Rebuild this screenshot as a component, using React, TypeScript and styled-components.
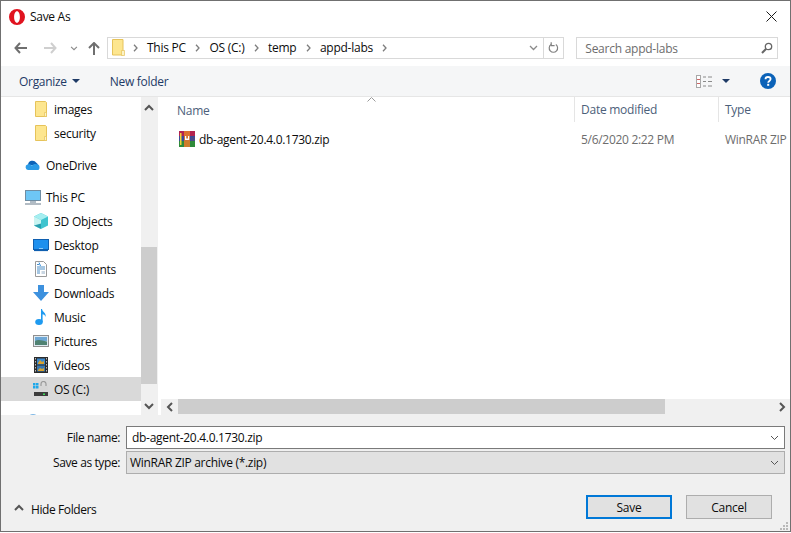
import React from 'react';
import styled, { createGlobalStyle } from 'styled-components';

const GlobalStyle = createGlobalStyle`
  html, body {
    margin: 0;
    padding: 0;
    background: #fff;
  }
  body {
    font-family: "Open Sans", "Noto Sans", sans-serif;
    font-size: 12px;
    color: #0c0c0c;
    overflow: hidden;
  }
  * {
    box-sizing: border-box;
  }
`;

const Window = styled.div`
  width: 791px;
  height: 532px;
  border: 1px solid #707070;
  display: flex;
  flex-direction: column;
  background: #fff;
  overflow: hidden;
`;

const TitleBar = styled.div`
  height: 31px;
  flex: none;
  display: flex;
  align-items: center;
  padding: 0 13px 0 8px;
  gap: 5px;
`;

const TitleText = styled.span`
  flex: 1;
  letter-spacing: -0.3px;
`;

const NavBar = styled.div`
  height: 34px;
  flex: none;
  display: flex;
  align-items: center;
  padding: 0 12px 2px 13px;
`;

const NavIcons = styled.div`
  width: 93px;
  display: flex;
  align-items: center;
`;

const NavSlot = styled.span<{ $w: number }>`
  width: ${(p) => p.$w}px;
  display: flex;
`;

const AddressBox = styled.div`
  width: 458px;
  height: 22px;
  border: 1px solid #d9d9d9;
  display: flex;
  align-items: center;
  padding: 0 0 1px 3px;
`;

const Crumbs = styled.div`
  flex: 1;
  display: flex;
  align-items: center;
  margin-left: 8px;
`;

const Crumb = styled.span`
  letter-spacing: -0.25px;
  margin: 0 9.5px 0 9px;
  white-space: nowrap;
`;

const AddressTail = styled.div`
  width: 20px;
  height: 20px;
  border-left: 1px solid #d9d9d9;
  display: flex;
  align-items: center;
  justify-content: center;
  margin-left: 5px;
`;

const SearchBox = styled.div`
  width: 202px;
  height: 22px;
  margin-left: 12px;
  border: 1px solid #d9d9d9;
  display: flex;
  align-items: center;
  justify-content: space-between;
  padding: 0 4px 0 8px;
  color: #6d6d6d;
  letter-spacing: -0.25px;
`;

const ToolBar = styled.div`
  height: 31px;
  flex: none;
  background: #f5f6f7;
  border-bottom: 1px solid #e6e6e6;
  display: flex;
  align-items: center;
  padding: 0 14px 0 18px;
  color: #1e3a66;
`;

const ToolLabel = styled.span`
  letter-spacing: -0.3px;
`;

const ToolGap = styled.span<{ $w: number }>`
  width: ${(p) => p.$w}px;
  display: flex;
  justify-content: flex-end;
`;

const Spacer = styled.span`
  flex: 1;
`;

const Main = styled.div`
  height: 318px;
  flex: none;
  display: flex;
`;

const Sidebar = styled.div`
  width: 140px;
  overflow: hidden;
  display: flex;
  flex-direction: column;
  gap: 8px;
`;

const NavGroup = styled.div`
  display: flex;
  flex-direction: column;
  flex: none;
`;

const NavItem = styled.div<{ $sub?: boolean; $selected?: boolean }>`
  height: 24px;
  flex: none;
  display: flex;
  align-items: center;
  gap: 5px;
  padding-left: ${(p) => (p.$sub ? 32 : 24)}px;
  background: ${(p) => (p.$selected ? '#d9d9d9' : 'transparent')};
  letter-spacing: -0.25px;
`;

const VScroll = styled.div`
  width: 16px;
  background: #f0f0f0;
  display: flex;
  flex-direction: column;
`;

const VArrow = styled.div`
  height: 17px;
  flex: none;
  display: flex;
  align-items: center;
  justify-content: center;
  margin-top: 3px;
`;

const VTrack = styled.div`
  flex: 1;
  display: flex;
  flex-direction: column;
  justify-content: flex-end;
  padding-bottom: 11px;
`;

const VThumb = styled.div`
  height: 137px;
  background: #cdcdcd;
`;

const ListPane = styled.div`
  flex: 1;
  min-width: 0;
  display: flex;
  flex-direction: column;
  border-left: 1px solid #f0f0f0;
  padding-left: 2px;
  overflow: hidden;
`;

const HeaderRow = styled.div`
  height: 25px;
  flex: none;
  display: flex;
  color: #4c607a;
  letter-spacing: -0.25px;
`;

const HeadName = styled.div`
  width: 414px;
  flex: none;
  display: flex;
  flex-direction: column;
  padding-left: 17px;
`;

const SortCaret = styled.span`
  height: 5px;
  display: flex;
  padding-left: 190px;
`;

const HeadCell = styled.div<{ $w: number }>`
  width: ${(p) => p.$w}px;
  flex: none;
  display: flex;
  align-items: center;
  padding-left: 6px;
  border-left: 1px solid #e5e5e5;
`;

const FileList = styled.div`
  flex: 1;
  padding-top: 6px;
`;

const FileRow = styled.div`
  height: 22px;
  display: flex;
  align-items: center;
  overflow: hidden;
  letter-spacing: -0.3px;
`;

const FileName = styled.div`
  width: 414px;
  flex: none;
  display: flex;
  align-items: center;
  gap: 4px;
  padding-left: 19px;
`;

const FileMeta = styled.div<{ $w: number }>`
  width: ${(p) => p.$w}px;
  flex: none;
  padding-left: 7px;
  color: #6d6d6d;
  white-space: nowrap;
`;

const HScroll = styled.div`
  height: 16px;
  flex: none;
  margin-left: 1px;
  background: #f0f0f0;
  display: flex;
  align-items: stretch;
`;

const HArrow = styled.div`
  width: 17px;
  flex: none;
  display: flex;
  align-items: center;
  justify-content: center;
`;

const HTrack = styled.div`
  flex: 1;
  padding-bottom: 1px;
  display: flex;
`;

const HThumb = styled.div`
  width: 487px;
  background: #cdcdcd;
`;

const Footer = styled.div`
  flex: 1;
  min-height: 0;
  background: #f0f0f0;
  display: flex;
  flex-direction: column;
  padding: 11px 4px 0 0;
`;

const FieldRow = styled.div`
  display: flex;
  align-items: center;
  margin-bottom: 2px;
  padding-right: 1px;
`;

const FieldLabel = styled.label`
  width: 119px;
  text-align: right;
  margin-right: 6px;
  letter-spacing: -0.4px;
`;

const FieldBox = styled.div<{ $combo?: boolean }>`
  flex: 1;
  height: 23px;
  display: flex;
  align-items: center;
  justify-content: space-between;
  padding: 0 5px 0 ${(p) => (p.$combo ? 3 : 5)}px;
  background: ${(p) => (p.$combo ? '#e1e1e1' : '#fff')};
  border: 1px solid ${(p) => (p.$combo ? '#adadad' : '#7a7a7a')};
  letter-spacing: -0.3px;
`;

const ActionRow = styled.div`
  display: flex;
  align-items: center;
  margin-top: 19px;
  padding: 0 14px 0 13px;
`;

const HideFolders = styled.div`
  display: flex;
  align-items: center;
  gap: 7px;
  flex: 1;
  padding-top: 4px;
  letter-spacing: -0.4px;
`;

const ActionButton = styled.button<{ $primary?: boolean }>`
  width: 86px;
  height: 24px;
  margin-left: 14px;
  padding: 0;
  background: #e1e1e1;
  border: ${(p) => (p.$primary ? '2px solid #0078d7' : '1px solid #adadad')};
  font: inherit;
  color: #0c0c0c;
  letter-spacing: -0.25px;
`;

const GripRow = styled.div`
  display: flex;
  justify-content: flex-end;
  margin: 3px -3px 0 0;
`;

const OperaIcon = () => (
  <svg width="16" height="16" viewBox="0 0 16 16">
    <path fill="#e0131f" fillRule="evenodd" d="M8 0a8 8 0 1 0 0 16A8 8 0 0 0 8 0zm0 2.2c1.7 0 2.9 2.6 2.9 5.8S9.7 13.8 8 13.8 5.1 11.2 5.1 8 6.3 2.2 8 2.2z" />
  </svg>
);

const CloseIcon = () => (
  <svg width="11" height="11" viewBox="0 0 11 11">
    <path d="M.5.5l10 10M10.500.5l-10 10" stroke="#1a1a1a" strokeWidth="1" fill="none" />
  </svg>
);

const ArrowLeft = ({ color = '#6f6f6f', flip = false }: { color?: string; flip?: boolean }) => (
  <svg width="13" height="12" viewBox="0 0 13 12" style={flip ? { transform: 'scaleX(-1)' } : undefined}>
    <path d="M6 1L1.500 6 6 11M1.500 6H13" stroke={color} strokeWidth="2" fill="none" />
  </svg>
);

const ArrowUp = () => (
  <svg width="12" height="13" viewBox="0 0 12 13">
    <path d="M1 6l5-5 5 5M6 1v12" stroke="#6f6f6f" strokeWidth="2" fill="none" />
  </svg>
);

const Chevron = ({ size = 7, color = '#8a8a8a', width = 1.3 }: { size?: number; color?: string; width?: number }) => (
  <svg width={size + 2} height={size - 1} viewBox="0 0 9 6">
    <path d="M1 1l3.500 3.500L8 1" stroke={color} strokeWidth={width} fill="none" />
  </svg>
);

const CrumbSep = () => (
  <svg width="5" height="8" viewBox="0 0 5 8">
    <path d="M1 .8L4 4 1 7.200" stroke="#7d7d7d" strokeWidth="1.300" fill="none" />
  </svg>
);

const RefreshIcon = () => (
  <svg width="11" height="12" viewBox="0 0 11 12">
    <path d="M7.800 2.600A4.200 4.200 0 1 1 3 2.600" stroke="#808080" strokeWidth="1.200" fill="none" />
    <path d="M3.200 .2v3.400h3.400" stroke="#808080" strokeWidth="1.200" fill="none" />
  </svg>
);

const SearchIcon = () => (
  <svg width="12" height="12" viewBox="0 0 12 12">
    <circle cx="7.500" cy="4.500" r="3.200" stroke="#666" strokeWidth="1.300" fill="none" />
    <path d="M5 7L1 11" stroke="#666" strokeWidth="2" />
  </svg>
);

const Caret = () => (
  <svg width="8" height="4" viewBox="0 0 8 4">
    <path d="M0 0h8L4 4z" fill="#1e3a66" />
  </svg>
);

const ViewIcon = () => (
  <svg width="17" height="13" viewBox="0 0 17 13">
    <rect x=".5" y=".5" width="4" height="12" fill="#fff" stroke="#a8a8a8" />
    <path d="M1 4.500h3M1 8.500h3" stroke="#c66" />
    <path d="M7 2h3M12 2h4M7 6.500h3M12 6.500h4M7 11h3M12 11h4" stroke="#8a8a8a" />
  </svg>
);

const HelpIcon = () => (
  <svg width="16" height="16" viewBox="0 0 16 16">
    <circle cx="8" cy="8" r="8" fill="#0b62b8" />
    <path d="M5.500 6.200C5.500 4.700 6.600 4 8 4s2.600.8 2.600 2.100c0 1.900-2.400 1.900-2.400 3.700" stroke="#fff" strokeWidth="1.800" fill="none" />
    <rect x="7.200" y="10.800" width="2" height="2" fill="#fff" />
  </svg>
);

const FolderIcon = () => (
  <svg width="16" height="16" viewBox="0 0 16 16">
    <path d="M2.500.500h10l1 1v14h-11z" fill="#fde68f" stroke="#e6c35a" />
    <path d="M11.500 15.500v-4h2v4z" fill="#fbf3c6" stroke="#e6c35a" strokeWidth=".7" />
  </svg>
);

const AddressFolder = () => (
  <svg width="14" height="17" viewBox="0 0 14 17">
    <path d="M1.500.500h10.500v15.500H1.500z" fill="#fde68f" stroke="#e6c35a" />
    <path d="M10.500 16.500v-5h3v5z" fill="#fbf3c6" stroke="#e6c35a" strokeWidth=".7" />
  </svg>
);

const OneDriveIcon = () => (
  <svg width="16" height="16" viewBox="0 0 16 16">
    <path d="M3 8a4.500 4.500 0 0 1 8.300-2.200A3 3 0 0 1 13 8z" fill="#0d63b8" />
    <path d="M3 13a2.800 2.800 0 0 1-.6-5.400c1.800-1 3.700 0 4.600 1 1-1.600 3-2 4.400-1.400a2.900 2.900 0 0 1 3.100 2.900A2.900 2.900 0 0 1 13.500 13z" fill="#2b9be6" />
  </svg>
);

const ThisPcIcon = () => (
  <svg width="16" height="16" viewBox="0 0 16 16">
    <rect x=".5" y="1.500" width="15" height="10" fill="#6ec6f5" stroke="#6f8da3" />
    <rect x="5" y="12" width="6" height="2" fill="#b0bcc6" />
    <path d="M0 15h16" stroke="#9aa6b0" strokeWidth="1.500" />
  </svg>
);

const ObjectsIcon = () => (
  <svg width="16" height="16" viewBox="0 0 16 16">
    <path d="M8 0l7 3.500v9L8 16l-7-3.500v-9z" fill="#3fc4cf" />
    <path d="M8 0l7 3.500L8 7 1 3.500z" fill="#a5eef0" />
    <path d="M8 7v9l-7-3.500v-9z" fill="#c8f4f2" />
    <path d="M8 10.500v5.500l-7-3.500z" fill="#2aa0b0" />
  </svg>
);

const DesktopIcon = () => (
  <svg width="16" height="16" viewBox="0 0 16 16">
    <rect x=".5" y="2.500" width="15" height="10" fill="#1e90ee" stroke="#0f5fb0" />
    <path d="M1 13.500h14" stroke="#0f5fb0" strokeWidth="1.200" />
    <path d="M6 11.500h4" stroke="#8ccbf8" />
  </svg>
);

const DocumentsIcon = () => (
  <svg width="16" height="16" viewBox="0 0 16 16">
    <path d="M2.500.500h8l3 3v12h-11z" fill="#fff" stroke="#9a9a9a" />
    <path d="M4 3.500h2M4 6h8M4 8h8M4 10h3M4 12h3" stroke="#4d8fc7" />
    <rect x="8.500" y="10" width="3.500" height="3" fill="#c9d6e2" />
    <path d="M6 1.500L7.500 5" stroke="#2e8de0" />
  </svg>
);

const DownloadsIcon = () => (
  <svg width="16" height="16" viewBox="0 0 16 16">
    <path d="M5 0h6v7h5l-8 9-8-9h5z" fill="#3d91de" />
  </svg>
);

const MusicIcon = () => (
  <svg width="16" height="16" viewBox="0 0 16 16">
    <ellipse cx="6" cy="13" rx="3.800" ry="3" fill="#1e9af0" />
    <path d="M8 13V0h1c.4 3 4.400 3.500 3.600 8C12 5.800 10.500 5.200 9.600 5.200V13z" fill="#1e9af0" />
  </svg>
);

const PicturesIcon = () => (
  <svg width="16" height="14" viewBox="0 0 16 14">
    <rect x=".5" y="1.500" width="15" height="11" fill="#dfeaf2" stroke="#8f8f8f" />
    <rect x="2" y="3" width="12" height="4" fill="#6fa8d6" />
    <path d="M2 7c3-2 6-1 12 .5V11H2z" fill="#4f8272" />
  </svg>
);

const VideosIcon = () => (
  <svg width="16" height="16" viewBox="0 0 16 16">
    <rect x="1" y="0" width="14" height="16" fill="#2c2c2c" />
    <rect x="4" y="1.500" width="8" height="6" fill="#3a88cc" />
    <rect x="4" y="8.500" width="8" height="6" fill="#3a78b0" />
    <path d="M5 6l2-3 2 2 2-1v3H5zM5 13l2-2 2 1 2-1v3H5z" fill="#d9a22e" />
    <path d="M2.500 1v14M13.500 1v14" stroke="#bbb" strokeDasharray="1.500 1.500" />
  </svg>
);

const DriveIcon = () => (
  <svg width="16" height="16" viewBox="0 0 16 16">
    <path d="M0 2h2.500v2.500H0zM3 2h2.500v2.500H3zM0 5h2.500v2.500H0zM3 5h2.500v2.500H3z" fill="#1fa8ea" />
    <path d="M8 7V3a2.500 2.500 0 0 1 5 0v4" stroke="#9a9a9a" fill="none" strokeWidth="1.200" />
    <rect x="7" y="5" width="8" height="4" fill="#d6d6d6" />
    <rect x="1" y="11" width="14" height="4" fill="#3c3c3c" />
    <rect x="10" y="12.500" width="2" height="1.500" fill="#3fdc5a" />
  </svg>
);

const NetworkIcon = () => (
  <svg width="16" height="16" viewBox="0 0 16 16">
    <circle cx="8" cy="7" r="6" fill="#7fb8e6" />
    <rect x="3" y="12" width="10" height="3" fill="#9aa6b0" />
  </svg>
);

const WinRarIcon = () => (
  <svg width="16" height="16" viewBox="0 0 16 16">
    <rect x="0" y="0" width="16" height="6" fill="#b3234f" />
    <rect x="0" y="5" width="16" height="5" fill="#3a4a9a" />
    <rect x="0" y="10" width="16" height="6" fill="#2f8a3a" />
    <rect x="5" y="0" width="6" height="16" fill="#e07a2a" opacity=".9" />
    <rect x="1" y="2" width="1.500" height="12" fill="#f2d33a" />
    <path d="M6 9V5h1.200v2.500H9V5h1.200v4z" fill="#fff" />
    <rect x="12" y="6" width="4" height="4" fill="#4a4a8a" />
  </svg>
);

const Grip = () => (
  <svg width="9" height="9" viewBox="0 0 9 9">
    <path d="M6 0h2v2H6zM3 3h2v2H3zM6 3h2v2H6zM0 6h2v2H0zM3 6h2v2H3zM6 6h2v2H6z" fill="#b8b8b8" />
  </svg>
);

const ScrollChevron = ({ dir }: { dir: 'up' | 'down' | 'left' | 'right' }) => {
  const paths = {
    up: 'M1 6l4-4 4 4',
    down: 'M1 2l4 4 4-4',
    left: 'M7 1L3 5l4 4',
    right: 'M3 1l4 4-4 4',
  };
  return (
    <svg width="10" height="10" viewBox="0 0 10 10" style={{ display: 'block' }}>
      <path d={paths[dir]} stroke="#555" strokeWidth="2" fill="none" />
    </svg>
  );
};

const folderRows = ['images', 'security'];
const pcRows: [string, React.ReactNode, boolean?][] = [
  ['3D Objects', <ObjectsIcon />],
  ['Desktop', <DesktopIcon />],
  ['Documents', <DocumentsIcon />],
  ['Downloads', <DownloadsIcon />],
  ['Music', <MusicIcon />],
  ['Pictures', <PicturesIcon />],
  ['Videos', <VideosIcon />],
  ['OS (C:)', <DriveIcon />, true],
];
const crumbs = ['This PC', 'OS (C:)', 'temp', 'appd-labs'];

export default function App() {
  return (
    <>
      <GlobalStyle />
      <Window>
        <TitleBar>
          <OperaIcon />
          <TitleText>Save As</TitleText>
          <CloseIcon />
        </TitleBar>

        <NavBar>
          <NavIcons>
            <NavSlot $w={30}><ArrowLeft /></NavSlot>
            <NavSlot $w={26}><ArrowLeft color="#cfcfcf" flip /></NavSlot>
            <NavSlot $w={18}><Chevron size={6} /></NavSlot>
            <NavSlot $w={19}><ArrowUp /></NavSlot>
          </NavIcons>
          <AddressBox>
            <AddressFolder />
            <Crumbs>
              {crumbs.map((c) => (
                <React.Fragment key={c}>
                  <CrumbSep />
                  <Crumb>{c}</Crumb>
                </React.Fragment>
              ))}
              <CrumbSep />
              <Spacer />
              <Chevron />
              <AddressTail><RefreshIcon /></AddressTail>
            </Crumbs>
          </AddressBox>
          <SearchBox>
            Search appd-labs
            <SearchIcon />
          </SearchBox>
        </NavBar>

        <ToolBar>
          <ToolLabel>Organize</ToolLabel>
          <ToolGap $w={13}><Caret /></ToolGap>
          <ToolGap $w={30} />
          <ToolLabel>New folder</ToolLabel>
          <Spacer />
          <ViewIcon />
          <ToolGap $w={17}><Caret /></ToolGap>
          <ToolGap $w={30} />
          <HelpIcon />
        </ToolBar>

        <Main>
          <Sidebar>
            <NavGroup>
              {folderRows.map((f) => (
                <NavItem $sub key={f}><FolderIcon />{f}</NavItem>
              ))}
            </NavGroup>
            <NavItem><OneDriveIcon />OneDrive</NavItem>
            <NavGroup>
              <NavItem><ThisPcIcon />This PC</NavItem>
              {pcRows.map(([label, icon, selected]) => (
                <NavItem $sub $selected={selected} key={label}>{icon}{label}</NavItem>
              ))}
            </NavGroup>
            <NavItem><NetworkIcon /></NavItem>
          </Sidebar>

          <VScroll>
            <VArrow><ScrollChevron dir="up" /></VArrow>
            <VTrack><VThumb /></VTrack>
            <VArrow><ScrollChevron dir="down" /></VArrow>
          </VScroll>

          <ListPane>
            <HeaderRow>
              <HeadName>
                <SortCaret>
                  <svg width="9" height="5" viewBox="0 0 9 5">
                    <path d="M.5 4.500l4-4 4 4" stroke="#9a9a9a" fill="none" />
                  </svg>
                </SortCaret>
                <span>Name</span>
              </HeadName>
              <HeadCell $w={144}>Date modified</HeadCell>
              <HeadCell $w={80}>Type</HeadCell>
            </HeaderRow>

            <FileList>
              <FileRow>
                <FileName><WinRarIcon />db-agent-20.4.0.1730.zip</FileName>
                <FileMeta $w={144}>5/6/2020 2:22 PM</FileMeta>
                <FileMeta $w={80}>WinRAR ZIP</FileMeta>
              </FileRow>
            </FileList>

            <HScroll>
              <HArrow><ScrollChevron dir="left" /></HArrow>
              <HTrack><HThumb /></HTrack>
              <HArrow><ScrollChevron dir="right" /></HArrow>
            </HScroll>
          </ListPane>
        </Main>

        <Footer>
          <FieldRow>
            <FieldLabel>File name:</FieldLabel>
            <FieldBox>db-agent-20.4.0.1730.zip<Chevron color="#555" width={1} /></FieldBox>
          </FieldRow>
          <FieldRow>
            <FieldLabel>Save as type:</FieldLabel>
            <FieldBox $combo>WinRAR ZIP archive (*.zip)<Chevron color="#555" width={1} /></FieldBox>
          </FieldRow>
          <ActionRow>
            <HideFolders>
              <ScrollChevron dir="up" />
              Hide Folders
            </HideFolders>
            <ActionButton $primary>Save</ActionButton>
            <ActionButton>Cancel</ActionButton>
          </ActionRow>
          <GripRow><Grip /></GripRow>
        </Footer>
      </Window>
    </>
  );
}
